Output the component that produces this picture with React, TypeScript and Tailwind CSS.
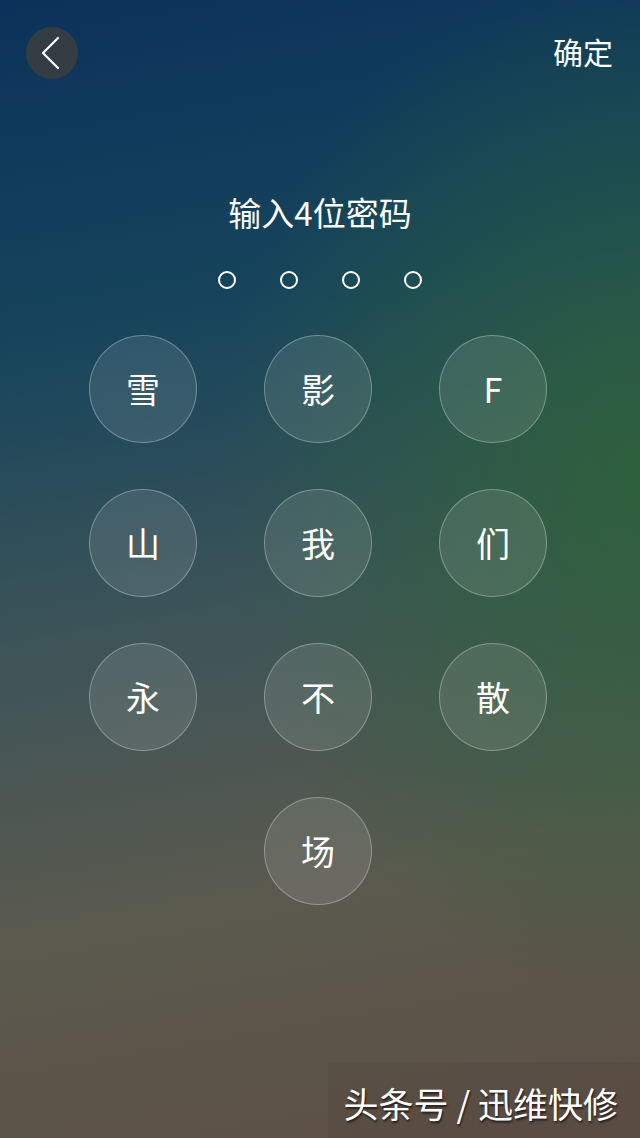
const keys = ['雪', '影', 'F', '山', '我', '们', '永', '不', '散']

const cjk = 'font-["Noto_Sans_CJK_SC","Noto_Sans",sans-serif]'

function Key({ label }: { label: string }) {
  return (
    <button className="w-[108px] h-[108px] rounded-full border border-white/30 bg-white/10 flex items-center justify-center text-white text-[34px] leading-none">
      {label}
    </button>
  )
}

export default function App() {
  return (
    <div
      className={`relative w-[640px] h-[1138px] overflow-hidden ${cjk} bg-[radial-gradient(ellipse_420px_520px_at_640px_480px,rgba(46,98,58,0.9),rgba(46,98,58,0)),linear-gradient(170deg,#0b325a_0%,#17455c_28%,#3d5458_52%,#5a5a4e_75%,#5f5046_100%)]`}
    >
      <div className="flex items-center justify-between pl-[26px] pr-[27px] pt-[27px]">
        <button className="w-[52px] h-[52px] rounded-full bg-[#3e3e3e]/80 flex items-center justify-center">
          <svg width="52" height="52" viewBox="0 0 52 52" fill="none">
            <polyline points="32,11 17,26 32,41" stroke="white" strokeWidth="2.2" strokeLinecap="round" strokeLinejoin="round" />
          </svg>
        </button>
        <span className="text-white text-[30px] leading-none -mt-[4px]">确定</span>
      </div>

      <h1 className="mt-[117px] text-center text-white text-[33px] leading-none">输入4位密码</h1>

      <div className="mt-[42px] flex justify-center gap-[44px]">
        {[0, 1, 2, 3].map(i => (
          <span key={i} className="w-[18px] h-[18px] rounded-full border-[2.5px] border-white" />
        ))}
      </div>

      <div className="mt-[46px] ml-[89px] grid grid-cols-[108px_108px_108px] gap-x-[67px] gap-y-[46px] w-[458px]">
        {keys.map(k => (
          <Key key={k} label={k} />
        ))}
        <div className="col-start-2">
          <Key label="场" />
        </div>
      </div>

      <div className="absolute right-0 bottom-0 w-[312px] h-[76px] bg-black/5 flex items-center justify-end pr-[22px]">
        <span className="text-white text-[35px] leading-none mt-[4px] [text-shadow:1px_2px_2px_rgba(0,0,0,0.6)]">
          头条号 / 迅维快修
        </span>
      </div>
    </div>
  )
}
